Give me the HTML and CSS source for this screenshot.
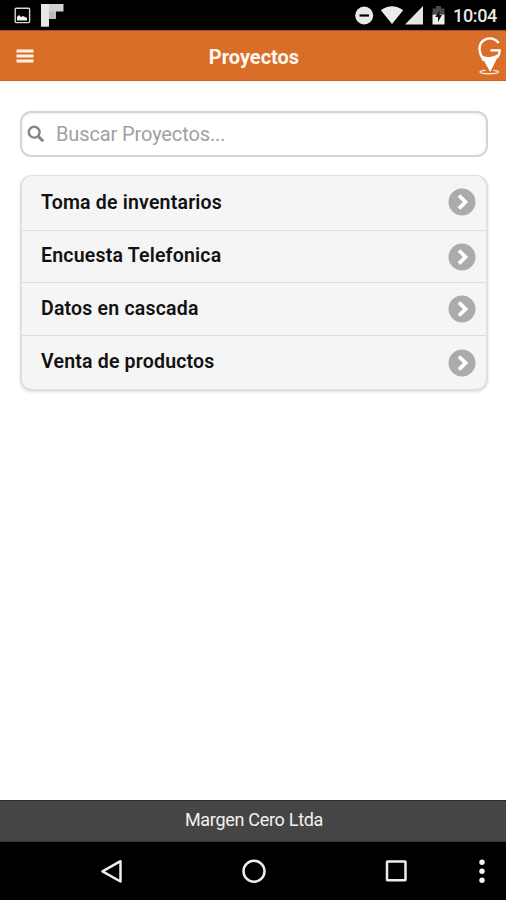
FILE: index.html
```html
<!DOCTYPE html>
<html lang="es">
<head>
<meta charset="utf-8">
<title>Proyectos</title>
<link rel="stylesheet" href="styles.css">
</head>
<body>
<div class="status">
  <svg class="status-left" width="80" height="30" viewBox="0 0 80 30">
    <rect x="15.2" y="8.2" width="14.4" height="14.4" rx="1" fill="none" stroke="#d8d8d8" stroke-width="1.4"/>
    <path d="M17 20.500v-3.500l2-2 2 2 2-1 4 2v2.500z" fill="#f4f4f4"/>
    <path d="M41 4h22.500v7.500h-7.500v7.500h-7.500v7.500H41z" fill="#d0d0d0"/>
    <path d="M41 4h8v22.500h-8z" fill="#e8e8e8"/>
    <path d="M49 11.500h7v7.500h-7z" fill="#bcbcbc"/>
  </svg>
  <svg class="status-right" width="100" height="30" viewBox="350 0 100 30">
    <circle cx="364.200" cy="15.500" r="9" fill="#e9e9e9"/>
    <path d="M359.500 15.500h9.500" stroke="#000" stroke-width="2.200"/>
    <path d="M380.800 10.200Q392 2.200 403.200 10.200L392 24z" fill="#ececec"/>
    <path d="M423 6v18.500h-18z" fill="#e6e6e6"/>
    <path d="M432.500 8.500h3.500V6h5v2.500h3.500v6h-12z" fill="#4b4b4b"/>
    <path d="M432.500 14.500h12v10h-12z" fill="#efefef"/>
    <path d="M439.500 10.500l-4.300 6.500h2.800v5l4-7h-2.500z" fill="#111"/>
  </svg>
  <span class="clock">10:04</span>
</div>
<header class="header">
  <svg class="menu" width="18" height="14" viewBox="0 0 18 14"><path d="M.5 2h17M.5 7h17M.5 12h17" stroke="#fff0df" stroke-width="2.800"/></svg>
  <h1>Proyectos</h1>
  <svg class="logo" width="26" height="40" viewBox="477 36 26 40">
    <path d="M498.800 43C496 38.800 490.500 37.200 485.500 39.400C479.500 42 478 48.500 481 55.500L484 61" fill="none" stroke="#fff" stroke-width="2.300"/>
    <path d="M490.500 50.300h9.300c0 2.600-1 5-2.600 7.500" fill="none" stroke="#fff" stroke-width="2.300"/>
    <path d="M480 53.500q4.400 4.200 9.900 3.400 5-.7 9.600-3.400L490.200 72z" fill="#fff"/>
    <path d="M485.500 70.200c-3.200.3-5.500 1-5.500 1.900 0 2.200 18.500 2.200 18.500 0 0-.9-2-1.600-5-1.900" fill="none" stroke="#ffe6d0" stroke-width="1.500"/>
  </svg>
</header>
<main class="content">
  <label class="search">
    <svg width="18" height="18" viewBox="0 0 18 18"><circle cx="7.200" cy="7.200" r="5.400" fill="none" stroke="#858585" stroke-width="2.400"/><path d="M11.200 11.200l5 5" stroke="#858585" stroke-width="3"/></svg>
    <span>Buscar Proyectos...</span>
  </label>
  <ul class="list">
    <li><span>Toma de inventarios</span><i class="go"><svg width="28" height="28" viewBox="0 0 28 28"><circle cx="14" cy="14" r="13.500"/><path d="M11 7.500l6.500 6.500-6.500 6.500"/></svg></i></li>
    <li><span>Encuesta Telefonica</span><i class="go"><svg width="28" height="28" viewBox="0 0 28 28"><circle cx="14" cy="14" r="13.500"/><path d="M11 7.500l6.500 6.500-6.500 6.500"/></svg></i></li>
    <li><span>Datos en cascada</span><i class="go"><svg width="28" height="28" viewBox="0 0 28 28"><circle cx="14" cy="14" r="13.500"/><path d="M11 7.500l6.500 6.500-6.500 6.500"/></svg></i></li>
    <li><span>Venta de productos</span><i class="go"><svg width="28" height="28" viewBox="0 0 28 28"><circle cx="14" cy="14" r="13.500"/><path d="M11 7.500l6.500 6.500-6.500 6.500"/></svg></i></li>
  </ul>
</main>
<footer class="footer"><span>Margen Cero Ltda</span></footer>
<nav class="nav">
  <svg width="506" height="58" viewBox="0 842 506 58" fill="none" stroke="#ededed" stroke-width="2.500" stroke-linejoin="round">
    <path d="M120.500 861.200v20.300L102.500 871.300z"/>
    <circle cx="254" cy="871.300" r="10.500"/>
    <rect x="387" y="861.500" width="18.500" height="18.800" rx=".5"/>
    <g fill="#f4f4f4" stroke="none"><circle cx="482" cy="862.300" r="2.700"/><circle cx="482" cy="871.200" r="2.700"/><circle cx="482" cy="880.200" r="2.700"/></g>
  </svg>
</nav>
</body>
</html>
```
FILE: styles.css
```css
* { box-sizing: border-box; }
body {
  margin: 0;
  height: 900px;
  display: flex;
  flex-direction: column;
  background: #fff;
  font-family: Roboto, sans-serif;
  overflow: hidden;
}
svg { display: block; flex: none; }
.status {
  height: 30px;
  display: flex;
  align-items: center;
  background: #000;
}
.status-right { margin-left: 270px; }
.clock {
  margin-left: 3px;
  padding-top: 2px;
  color: #e8e8e8;
  font-size: 18px;
  line-height: 22px;
  font-weight: 500;
  letter-spacing: -0.35px;
  white-space: nowrap;
}
.header {
  height: 51px;
  display: grid;
  grid-template-columns: 34px 1fr 34px;
  align-items: center;
  background: #d86e27;
  border-top: 1px solid #a3521b;
  border-bottom: 1px solid #cf6219;
}
.menu { margin-left: 16px; }
.header h1 {
  margin: 3px 0 0 2px;
  color: #fff8f0;
  font-size: 20px;
  line-height: 24px;
  font-weight: 700;
  text-align: center;
}
.logo { margin-left: 5px; }
.content {
  flex: 1;
  padding: 30px 18px 0 20px;
}
.search {
  height: 46px;
  display: flex;
  align-items: center;
  padding-left: 5px;
  border: 2px solid #d4d4d4;
  border-radius: 11px;
  box-shadow: inset 0 1px 3px #eee;
  color: #a1a1a1;
  font-size: 20px;
  letter-spacing: -0.12px;
}
.search span { margin-left: 11px; }
.list {
  height: 216px;
  margin: 18px 0 0;
  padding: 0;
  display: grid;
  grid-template-rows: 54px 52px 53px 1fr;
  list-style: none;
  background: #f5f5f5;
  border: 2px solid #e0e0e0;
  border-top-width: 1px;
  border-radius: 12px;
  box-shadow: 0 1px 3px #ddd;
}
.list li {
  display: flex;
  align-items: center;
  justify-content: space-between;
  padding: 0 10px 0 19px;
  color: #111;
  font-size: 19.5px;
  font-weight: 600;
  letter-spacing: 0.2px;
}
.list li span { padding-bottom: 2px; }
.list li:first-child .go { margin-top: -2px; }
.list li + li { border-top: 1px solid #ddd; }
.go circle { fill: #ababab; }
.go path { fill: none; stroke: #fff; stroke-width: 3.800; }
.footer {
  height: 42px;
  display: flex;
  align-items: center;
  justify-content: center;
  padding: 0 0 3px 2px;
  background: #454545;
  border-top: 1px solid #292929;
  border-bottom: 1px solid #333;
  color: #f1f1f1;
  font-size: 18px;
  letter-spacing: -0.3px;
}
.nav { height: 58px; background: #000; }
```
